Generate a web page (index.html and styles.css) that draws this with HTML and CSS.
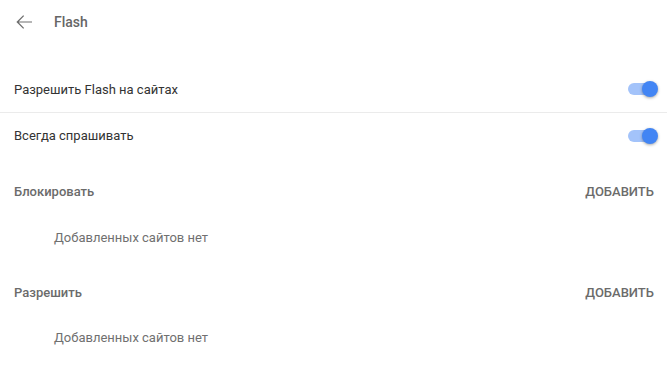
FILE: index.html
```html
<!DOCTYPE html>
<html lang="ru">
<head>
<meta charset="utf-8">
<title>Flash</title>
<link rel="stylesheet" href="styles.css">
</head>
<body>
<div class="page">
  <header class="header">
    <button class="back" aria-label="Назад">
      <svg viewBox="0 0 24 24" width="24" height="24"><path d="M20 11.4H6.8l5.3-5.3-0.9-0.9L4.4 12l6.8 6.8 0.9-0.9-5.3-5.3H20z" fill="currentColor"/></svg>
    </button>
    <h1 class="title">Flash</h1>
  </header>

  <div class="list">
    <div class="row row-first">
      <span class="label">Разрешить Flash на сайтах</span>
      <span class="toggle"><span class="bar"></span><span class="knob"></span></span>
    </div>
    <div class="row row-sep">
      <span class="label">Всегда спрашивать</span>
      <span class="toggle"><span class="bar"></span><span class="knob"></span></span>
    </div>
  </div>

  <section class="section">
    <div class="section-head">
      <span class="heading">Блокировать</span>
      <span class="add">ДОБАВИТЬ</span>
    </div>
    <div class="empty">Добавленных сайтов нет</div>
  </section>

  <section class="section section-second">
    <div class="section-head">
      <span class="heading">Разрешить</span>
      <span class="add">ДОБАВИТЬ</span>
    </div>
    <div class="empty">Добавленных сайтов нет</div>
  </section>
</div>
</body>
</html>
```

FILE: styles.css
```css
* { box-sizing: border-box; }
html, body { margin: 0; padding: 0; background: #fff; }
body {
  font-family: Roboto, "Noto Sans", "Liberation Sans", sans-serif;
  font-size: 13px;
  color: #333;
}
.page { width: 667px; }

.header {
  display: flex;
  align-items: center;
  height: 44px;
}
.back {
  display: flex;
  align-items: center;
  justify-content: center;
  width: 24px;
  height: 24px;
  margin-left: 12px;
  padding: 0;
  border: 0;
  background: none;
  color: #6e6e6e;
}
.title {
  margin: 0 0 0 18px;
  font-size: 14px;
  font-weight: 500;
  color: #666;
}

.list { margin-top: 22px; }
.row {
  display: flex;
  align-items: center;
  justify-content: space-between;
  padding: 0 9px 0 14px;
}
.row-first { height: 46px; }
.row-sep { height: 46px; border-top: 1px solid #ebebeb; }
.label { color: #333; }

.toggle {
  position: relative;
  width: 30px;
  height: 16px;
  display: block;
}
.bar {
  position: absolute;
  left: 0;
  top: 2px;
  width: 26px;
  height: 12px;
  border-radius: 6px;
  background: #a3c3fa;
}
.knob {
  position: absolute;
  right: 0;
  top: 0;
  width: 16px;
  height: 16px;
  border-radius: 50%;
  background: #4285f4;
  box-shadow: 0 1px 3px rgba(0,0,0,0.35);
}

.section { margin-top: 10px; }
.section-head {
  display: flex;
  align-items: center;
  justify-content: space-between;
  height: 46px;
  padding: 0 13px 0 14px;
}
.section-second .section-head { height: 44px; }
.heading {
  font-weight: 500;
  color: #6b6b6b;
}
.add {
  font-weight: 500;
  color: #6b6b6b;
}
.empty {
  display: flex;
  align-items: center;
  height: 46px;
  padding-left: 54px;
  color: #707070;
}
```
